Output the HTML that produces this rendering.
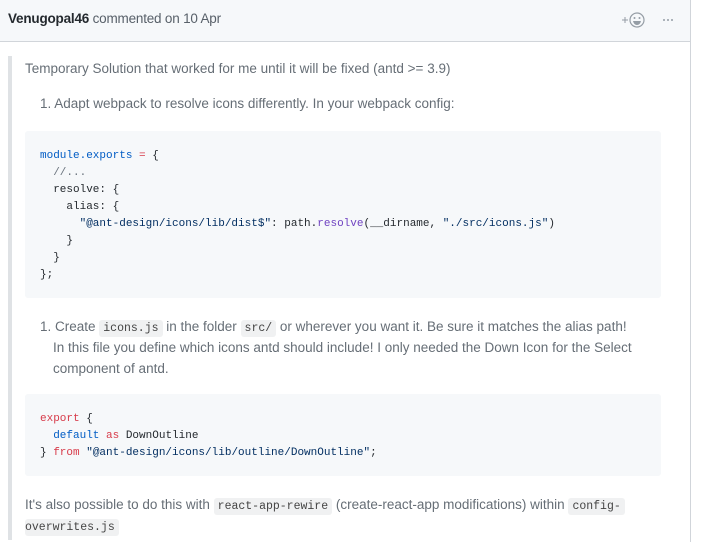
<!DOCTYPE html>
<html><head><style>
html,body{margin:0;width:705px;height:540px;overflow:hidden;background:#fff;font-family:"Liberation Sans",sans-serif;color:#24292e;}
*{box-sizing:border-box}
.box{position:absolute;left:-1px;top:-1px;width:692px;height:543px;border:1px solid #d1d5da;border-bottom:none}
.hdr{position:absolute;left:0;top:0;width:690px;height:42px;background:#f6f8fa;border-bottom:1px solid #d1d5da;}
.hdr .t{position:absolute;left:8px;top:11px;font-size:13.5px;color:#586069;letter-spacing:-0.2px}
.hdr b{color:#24292e}
.bq{position:absolute;left:8px;top:56px;width:4px;height:484px;background:#dfe2e5}
.p{position:absolute;font-size:13.5px;color:#666e76;letter-spacing:0;line-height:21px;white-space:nowrap}
.code{position:absolute;left:25px;width:636px;background:#f6f8fa;border-radius:3px;font-family:"Liberation Mono",monospace;font-size:11px;line-height:17px;color:#24292e;white-space:pre;padding:17px 0 0 15px}
.c{font-family:"Liberation Mono",monospace;font-size:11.5px;background:#f0f1f2;padding:2px 4px;border-radius:3px;color:#444}
.bl{color:#005cc5}.rd{color:#d73a49}.pu{color:#6f42c1}.gr{color:#6a737d}.st{color:#032f62}
</style></head><body>
<div class="box"></div>
<div class="hdr"><div class="t"><b>Venugopal46</b> commented on 10 Apr</div>
<svg style="position:absolute;left:620px;top:10px" width="60" height="20">
<path d="M2 10h6M5 7v6" stroke="#959da5" stroke-width="1"/>
<circle cx="17" cy="10" r="7" fill="none" stroke="#959da5" stroke-width="1.2"/>
<circle cx="14.5" cy="8" r="1" fill="#959da5"/><circle cx="19.5" cy="8" r="1" fill="#959da5"/>
<path d="M13 11h8q-1 4-4 4t-4-4z" fill="#959da5"/>
<circle cx="44" cy="10" r="1" fill="#959da5"/><circle cx="48" cy="10" r="1" fill="#959da5"/><circle cx="52" cy="10" r="1" fill="#959da5"/>
</svg></div>
<div class="bq"></div>
<div class="p" style="left:25px;top:58px">Temporary Solution that worked for me until it will be fixed (antd &gt;= 3.9)</div>
<div class="p" style="left:40px;top:93px">1. Adapt webpack to resolve icons differently. In your webpack config:</div>
<div class="code" style="top:131px;height:167px"><span class="bl">module.exports</span> <span class="rd">=</span> {
  <span class="gr">//...</span>
  resolve: {
    alias: {
      <span class="st">"@ant-design/icons/lib/dist$"</span>: path.<span class="pu">resolve</span>(__dirname, <span class="st">"./src/icons.js"</span>)
    }
  }
};</div>
<div class="p" style="left:40px;top:316px">1. Create <span class="c">icons.js</span> in the folder <span class="c">src/</span> or wherever you want it. Be sure it matches the alias path!</div>
<div class="p" style="left:53px;top:337px">In this file you define which icons antd should include! I only needed the Down Icon for the Select</div>
<div class="p" style="left:53px;top:358px">component of antd.</div>
<div class="code" style="top:394px;height:82px"><span class="rd">export</span> {
  <span class="bl">default</span> <span class="rd">as</span> DownOutline
} <span class="rd">from</span> <span class="st">"@ant-design/icons/lib/outline/DownOutline"</span>;</div>
<div class="p" style="left:25px;top:494px">It's also possible to do this with <span class="c">react-app-rewire</span> (create-react-app modifications) within <span class="c">config-</span></div>
<div class="p" style="left:25px;top:515px"><span class="c" style="padding-left:0">overwrites.js</span></div>
</body></html>
